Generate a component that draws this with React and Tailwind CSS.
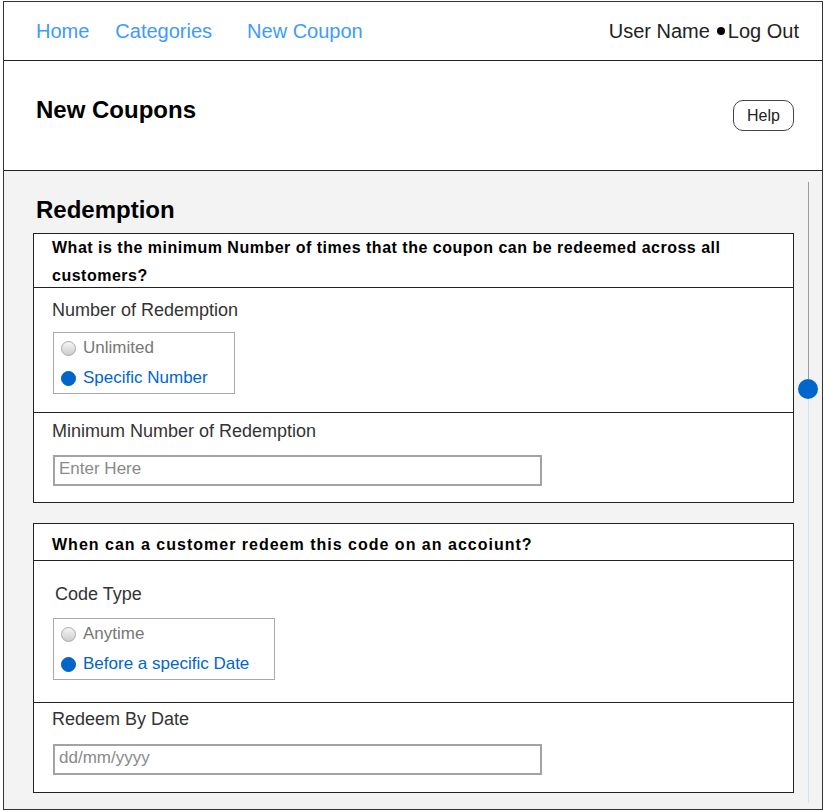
import React from 'react'

const Radio = ({ checked, label }) => (
  <div className="flex items-center h-[30px] pl-[7px]">
    {checked ? (
      <span className="w-[15px] h-[15px] rounded-full bg-[#0066cc] border border-[#0b5bb3] flex-shrink-0" />
    ) : (
      <span className="w-[15px] h-[15px] rounded-full bg-gradient-to-b from-[#f6f6f6] to-[#cdcdcd] border border-[#a8a8a8] flex-shrink-0" />
    )}
    <span className={checked ? 'ml-[7px] text-[17px] text-[#0066cc]' : 'ml-[7px] text-[17px] text-[#777]'}>
      {label}
    </span>
  </div>
)

const TextBox = ({ placeholder, className }) => (
  <div className={'w-[489px] h-[31px] ml-[19px] border-2 border-[#a3a3a3] bg-white flex items-center pl-[4px] pb-[5px] ' + (className || '')}>
    <span className="text-[17px] text-[#8a8a8a] leading-none">{placeholder}</span>
  </div>
)

export default function App() {
  return (
    <div className="bg-white w-[824px] h-[811px] pt-[1px] pl-[3px] font-['Liberation_Sans',Arial,sans-serif]">
      <div className="w-[820px] h-[809px] border border-[#333] flex flex-col">
        {/* Nav */}
        <div className="h-[59px] border-b border-[#222] flex items-center pl-[32px] pr-[23px] text-[20px] flex-shrink-0">
          <span className="text-[#3d9bff]">Home</span>
          <span className="text-[#3d9bff] ml-[26px]">Categories</span>
          <span className="text-[#3d9bff] ml-[35px]">New Coupon</span>
          <div className="ml-auto flex items-center text-[#222]">
            <span>User Name</span>
            <span className="w-[8px] h-[8px] rounded-full bg-black ml-[7px] mr-[3px]" />
            <span>Log Out</span>
          </div>
        </div>

        {/* Title */}
        <div className="h-[110px] border-b border-[#222] flex items-start pl-[32px] pr-[28px] pt-[35px] flex-shrink-0">
          <h1 className="text-[24px] leading-[28px] font-bold text-black">New Coupons</h1>
          <button className="ml-auto mt-[4px] w-[61px] h-[31px] rounded-[10px] border border-[#444] text-[16px] text-[#222] bg-white">
            Help
          </button>
        </div>

        {/* Body */}
        <div className="flex-1 bg-[#f3f3f3] flex">
          <div className="w-[761px] ml-[29px] pt-[25px]">
            <h2 className="text-[24px] leading-[28px] font-bold text-black pl-[3px] mb-[9px]">Redemption</h2>

            {/* Card 1 */}
            <div className="border border-[#222] bg-white">
              <div className="h-[54px] border-b border-[#222] pl-[18px] pr-[40px] text-[16px] leading-[28px] font-bold tracking-[0.5px] text-black">
                What is the minimum Number of times that the coupon can be redeemed across all customers?
              </div>
              <div className="border-b border-[#222] pt-[10px] pb-[18px]">
                <div className="pl-[18px] text-[18px] leading-[24px] text-[#333]">Number of Redemption</div>
                <div className="mt-[10px] ml-[19px] w-[182px] border border-[#aaa]">
                  <Radio label="Unlimited" />
                  <Radio checked label="Specific Number" />
                </div>
              </div>
              <div className="pt-[6px] pb-[16px]">
                <div className="pl-[18px] text-[18px] leading-[24px] text-[#333]">Minimum Number of Redemption</div>
                <TextBox placeholder="Enter Here" className="mt-[12px]" />
              </div>
            </div>

            {/* Card 2 */}
            <div className="mt-[20px] border border-[#222] bg-white">
              <div className="border-b border-[#222] pt-[7px] pb-[2px] pl-[18px] text-[16px] leading-[27px] font-bold tracking-[1px] text-black">
                When can a customer redeem this code on an accoiunt?
              </div>
              <div className="border-b border-[#222] pt-[21px] pb-[22px]">
                <div className="pl-[21px] text-[18px] leading-[24px] text-[#333]">Code Type</div>
                <div className="mt-[12px] ml-[19px] w-[222px] border border-[#aaa] flex flex-col">
                  <Radio label="Anytime" />
                  <Radio checked label="Before a specific Date" />
                </div>
              </div>
              <div className="pt-[4px] pb-[17px]">
                <div className="pl-[18px] text-[18px] leading-[24px] text-[#333]">Redeem By Date</div>
                <TextBox placeholder="dd/mm/yyyy" className="mt-[13px]" />
              </div>
            </div>
          </div>

          {/* Scrollbar */}
          <div className="flex-1 flex flex-col items-center pt-[11px] pb-[6px]">
            <div className="w-px h-[197px] bg-[#9c9c9c]" />
            <div className="w-[20px] h-[20px] rounded-full bg-[#0066cc] flex-shrink-0" />
            <div className="w-px flex-1 bg-[#cfe4f8]" />
          </div>
        </div>
      </div>
    </div>
  )
}
